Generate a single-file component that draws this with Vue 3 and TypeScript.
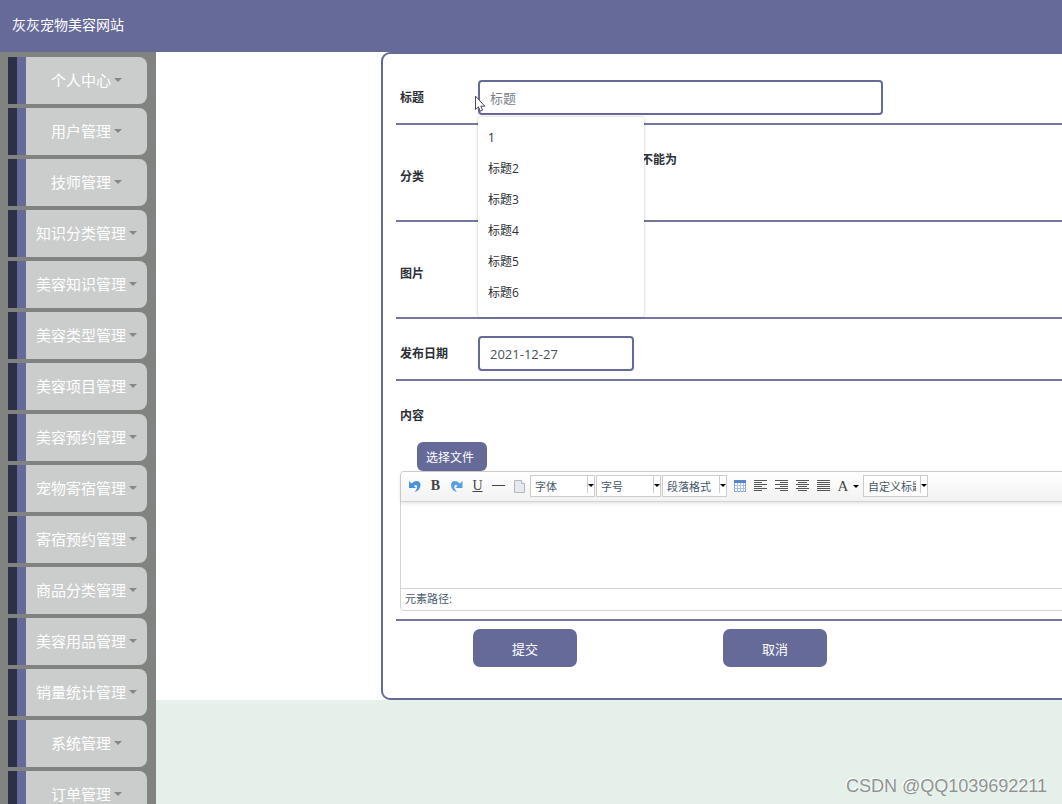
<script setup lang="ts">
import { ref } from 'vue'

const menu: string[] = [
  '个人中心', '用户管理', '技师管理', '知识分类管理', '美容知识管理',
  '美容类型管理', '美容项目管理', '美容预约管理', '宠物寄宿管理', '寄宿预约管理',
  '商品分类管理', '美容用品管理', '销量统计管理', '系统管理', '订单管理',
]
const suggestions: string[] = ['1', '标题2', '标题3', '标题4', '标题5', '标题6']
const title = ref('')
const date = ref('2021-12-27')
const selects: string[] = ['字体', '字号', '段落格式']

interface Align { name: string; d: string }
const aligns: Align[] = [
  { name: '左对齐', d: 'M0 .5h13M0 2.5h8M0 4.5h13M0 6.500h8M0 8.500h13M0 10.500h8' },
  { name: '右对齐', d: 'M0 .5h13M5 2.5h8M0 4.5h13M5 6.500h8M0 8.500h13M5 10.500h8' },
  { name: '居中对齐', d: 'M0 .5h13M2 2.5h9M0 4.5h13M2 6.500h9M0 8.500h13M2 10.500h9' },
  { name: '两端对齐', d: 'M0 .5h13M0 2.5h13M0 4.5h13M0 6.500h13M0 8.500h13M0 10.500h13' },
]
</script>

<template>
  <div class="page">
    <header class="top">灰灰宠物美容网站</header>
    <div class="body">
      <nav class="side">
        <button v-for="m in menu" :key="m" type="button" class="item">
          {{ m }}<span class="caret"></span>
        </button>
      </nav>
      <main class="main">
        <div class="sheet">
          <form class="card" @submit.prevent>
            <div class="row">
              <label class="label" for="title">标题</label>
              <div class="field">
                <input id="title" v-model="title" class="box wide" type="text" placeholder="标题" autocomplete="off" />
                <ul class="suggest">
                  <li v-for="s in suggestions" :key="s">{{ s }}</li>
                </ul>
                <svg class="pointer" width="12" height="18" viewBox="0 0 12 18">
                  <path d="M1.500 1v13.500l3-2.600 1.700 4.300 2.400-1-1.800-4h4z" fill="#fff" stroke="#4a4a60" />
                </svg>
              </div>
            </div>
            <div class="row tall">
              <span class="label">分类</span>
              <strong class="note">不能为</strong>
            </div>
            <div class="row tall">
              <span class="label">图片</span>
            </div>
            <div class="row">
              <label class="label" for="date">发布日期</label>
              <input id="date" v-model="date" class="box short" type="text" />
            </div>
            <div class="row content">
              <span class="label">内容</span>
              <button type="button" class="file">选择文件</button>
              <div class="editor">
                <div class="tools">
                  <button type="button" class="tool" aria-label="撤销">
                    <svg width="13" height="13" viewBox="0 0 13 13">
                      <path d="M1 1v7h7L6 6C7 4.300 9 4.600 9.200 6.500c.1 2-.8 3.500-2.700 5.500 4-1 6-4 6-7C12.500.5 7.500-.5 3.600 3.500z" fill="#4b94dc" />
                    </svg>
                  </button>
                  <button type="button" class="tool letter bold" aria-label="加粗">B</button>
                  <button type="button" class="tool" aria-label="重做">
                    <svg width="13" height="13" viewBox="0 0 13 13">
                      <path d="M12.500 1v7h-7l2-2C6.500 4.300 4.500 4.600 4.300 6.500c-.1 2 .8 3.500 2.700 5.500C3 11 1 8 1 5 1 .5 6-.5 9.900 3.500z" fill="#5a9fe0" />
                    </svg>
                  </button>
                  <button type="button" class="tool letter under" aria-label="下划线">U</button>
                  <button type="button" class="tool" aria-label="分隔线">
                    <svg width="13" height="13" viewBox="0 0 13 13"><path d="M0 5.500h13" stroke="#444" /></svg>
                  </button>
                  <button type="button" class="tool" aria-label="清空文档">
                    <svg width="13" height="13" viewBox="0 0 13 13">
                      <path d="M1.500.5h7l3 3v9h-10z" fill="#e6e9ee" stroke="#b4b8bf" />
                      <path d="M8.500.5v3h3" fill="#fff" stroke="#b4b8bf" />
                    </svg>
                  </button>
                  <span v-for="s in selects" :key="s" class="pick">
                    <select :aria-label="s"><option>{{ s }}</option></select>
                  </span>
                  <button type="button" class="tool" aria-label="表格">
                    <svg width="12" height="12" viewBox="0 0 12 12">
                      <path d="M.5.5h11v11H.5z" fill="#fff" stroke="#7d9fd6" />
                      <path d="M0 0h12v3H0z" fill="#5583cf" />
                      <path d="M3.500 3v9M6.500 3v9M9.500 3v9M0 5.500h12M0 8.500h12" stroke="#a9c1e8" />
                    </svg>
                  </button>
                  <button v-for="a in aligns" :key="a.name" type="button" class="tool" :aria-label="a.name">
                    <svg width="13" height="12" viewBox="0 0 13 12"><path :d="a.d" stroke="#555" /></svg>
                  </button>
                  <button type="button" class="tool letter color" aria-label="字体颜色">A<span class="arrow"></span></button>
                  <span class="pick">
                    <select aria-label="自定义标题"><option>自定义标题</option></select>
                  </span>
                </div>
                <div class="area" contenteditable="true" role="textbox" aria-label="内容"></div>
                <div class="path">元素路径:</div>
              </div>
            </div>
            <div class="actions">
              <button type="submit" class="act">提交</button>
              <button type="button" class="act">取消</button>
            </div>
          </form>
        </div>
      </main>
    </div>
    <div class="mark">CSDN @QQ1039692211</div>
  </div>
</template>

<style>
body { margin: 0; }
</style>

<style scoped>
.page {
  position: relative;
  height: 100vh;
  display: flex;
  flex-direction: column;
  overflow: hidden;
  background: #e6f0eb;
  color: #2c3035;
  font-family: "Open Sans", "Noto Sans CJK SC", sans-serif;
  font-size: 12px;
  line-height: 18px;
}
.page * { box-sizing: border-box; }
button, input, select { font-family: inherit; margin: 0; }
.top {
  flex: none;
  height: 52px;
  padding: 0 12px 2px;
  display: flex;
  align-items: center;
  background: #666a99;
  color: #fff;
  font-size: 14px;
}
.body { flex: 1; min-height: 0; display: flex; }
.side {
  flex: none;
  width: 156px;
  padding: 5px 9px 0 8px;
  display: flex;
  flex-direction: column;
  gap: 4px;
  overflow: hidden;
  background: #80837f;
}
.item {
  flex: none;
  height: 47px;
  padding: 0 0 2px 9px;
  display: flex;
  align-items: center;
  justify-content: center;
  gap: 3px;
  border: 0;
  border-left: 9px solid #2e3048;
  border-radius: 0 8px 8px 0;
  background: #cbcdcc;
  box-shadow: inset 9px 0 0 #666a99;
  color: #fff;
  font-size: 15px;
  line-height: 22px;
}
.caret { border: 4px solid transparent; border-top-color: #858885; border-bottom: 0; }
.main { flex: 1; min-width: 0; overflow: hidden; }
.sheet { background: #fff; padding-left: 225px; margin-right: -24px; }
.card {
  border: 2px solid #666a99;
  border-radius: 9px;
  padding: 9px 0 31px 13px;
}
.row {
  display: flex;
  align-items: center;
  padding: 17px 0 8px 4px;
  border-bottom: 2px solid #7477a2;
}
.label { flex: none; width: 78px; font-weight: bold; }
.tall { height: 97px; }
.note { align-self: flex-start; margin: 9px 0 0 163px; }
.field { position: relative; flex: 1; }
.box {
  display: block;
  height: 35px;
  padding: 0 10px;
  border: 2px solid #666a99;
  border-radius: 4px;
  background: #fff;
  color: #495057;
  font-size: 13px;
  outline: 0;
}
.box::placeholder { color: #7b838a; opacity: 1; }
.wide { width: 405px; }
.short { width: 156px; }
.suggest {
  position: absolute;
  z-index: 2;
  top: 37px;
  left: 0;
  width: 166px;
  margin: 0;
  padding: 5px 0 9px;
  list-style: none;
  background: #fff;
  border-radius: 3px;
  box-shadow: 0 0 3px rgba(0, 0, 0, 0.25);
}
.suggest li { padding: 0 10px; line-height: 31px; }
.pointer { position: absolute; z-index: 3; left: -4px; top: 15px; }
.content { flex-direction: column; align-items: flex-start; padding-top: 26px; }
.file {
  height: 29px;
  margin: 17px 0 0 17px;
  min-width: 70px;
  padding: 0 9px;
  border: 0;
  border-radius: 6px;
  background: #666a99;
  color: #fff;
  font-size: 12px;
  text-align: left;
}
.editor { align-self: stretch; border: 1px solid #d4d4d4; border-radius: 4px; color: #44586a; font-size: 11px; }
.tools {
  display: flex;
  align-items: center;
  height: 30px;
  padding: 0 3px 1px;
  border-bottom: 1px solid #d4d4d4;
  border-radius: 4px 4px 0 0;
  background: linear-gradient(#fff, #f2f2f2);
  box-shadow: 0 1px 4px rgba(0, 0, 0, 0.14);
}
.tool {
  flex: none;
  display: flex;
  align-items: center;
  justify-content: center;
  width: 21px;
  height: 22px;
  padding: 0;
  border: 0;
  background: none;
}
.letter { font-family: "Liberation Serif", serif; font-size: 14px; color: #444; }
.bold { font-weight: bold; }
.under { text-decoration: underline; }
.color { width: 29px; gap: 5px; font-size: 15px; }
.arrow { border: 3px solid transparent; border-top-color: #000; border-bottom: 0; }
.pick { position: relative; flex: none; width: 65px; height: 22px; }
.pick + .pick { margin-left: 1px; }
.pick + .tool { margin-left: 2px; }
.pick select {
  display: block;
  width: 65px;
  height: 22px;
  padding: 0 11px 0 4px;
  appearance: none;
  border: 1px solid #ccc;
  border-radius: 0;
  background: #fff;
  color: #44586a;
  font-size: 11px;
}
.pick::before {
  content: "";
  position: absolute;
  right: 7px;
  top: 1px;
  height: 17px;
  border-left: 1px solid #ccc;
}
.pick::after {
  content: "";
  position: absolute;
  right: 1px;
  top: 9px;
  border: 3px solid transparent;
  border-top-color: #000;
  border-bottom: 0;
}
.area { height: 86px; outline: 0; }
.path { height: 22px; padding: 0 4px; border-top: 1px solid #d4d4d4; line-height: 20px; }
.actions { display: flex; gap: 146px; padding: 8px 0 0 77px; }
.act {
  width: 104px;
  height: 38px;
  border: 0;
  border-radius: 7px;
  background: #666a99;
  color: #fff;
  font-size: 13px;
}
.mark {
  position: absolute;
  right: 15px;
  bottom: 7px;
  color: #8f9492;
  font-family: "Liberation Sans", Arial, sans-serif;
  font-size: 18px;
  line-height: 22px;
  text-shadow: -1px -1px 0 #fff;
}
</style>
